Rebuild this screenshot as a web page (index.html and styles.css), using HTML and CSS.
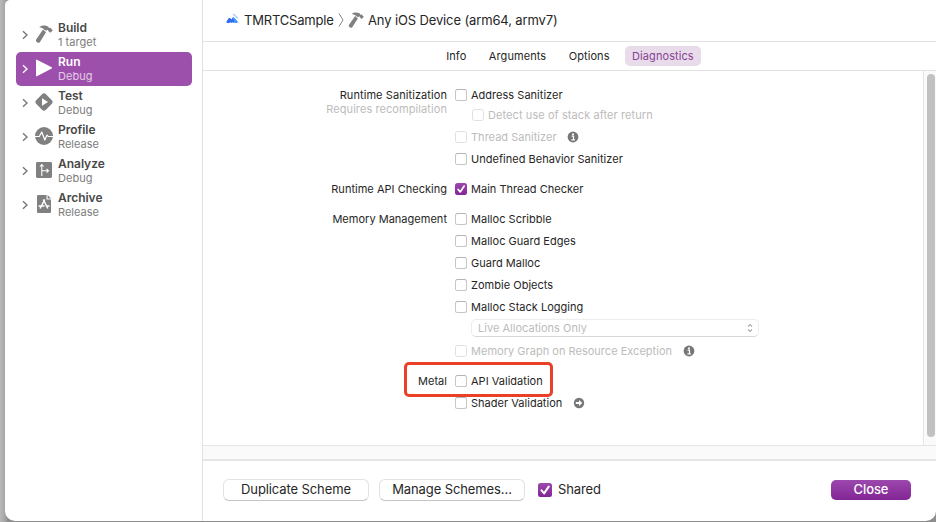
FILE: index.html
```html
<!DOCTYPE html>
<html lang="en">
<head>
<meta charset="utf-8">
<title>Edit Scheme</title>
<link rel="stylesheet" href="styles.css">
</head>
<body>
<svg width="0" height="0" class="defs">
  <symbol id="hammer" viewBox="0 0 18 18"><path d="M4.200 2.200C6.500 0.300 10.500 0 13.300 1.800L14 3.100L15.300 2.700L17.800 5.300L15.400 7.800L13.200 6L12.900 4.700L10.800 5.800L8.600 4C7.500 2.900 5.800 2.400 4.200 2.200ZM8 4.600L11 7.300L4.800 17.200Q3.600 18.300 2.300 17.400L1.400 16.600Q0.400 15.600 1.200 14.400Z"/></symbol>
  <symbol id="chevron" viewBox="0 0 6 10"><path d="M1 1.300L5 5L1 8.700" fill="none" stroke="currentColor" stroke-width="1.400"/></symbol>
  <symbol id="info" viewBox="0 0 12 12"><circle cx="6" cy="6" r="5.400" fill="#777"/><circle cx="6" cy="3.200" r="1" fill="#fff"/><path d="M4.600 5.200H6.500V8.700M4.400 8.900H7.900" fill="none" stroke="#fff" stroke-width="1.200"/></symbol>
  <symbol id="check" viewBox="0 0 12 12"><path d="M3 6.300L5.200 8.900L9.200 3.100" fill="none" stroke="#fff" stroke-width="1.700" stroke-linecap="round" stroke-linejoin="round"/></symbol>
</svg>
<div class="window">
  <nav class="sidebar">
    <div class="action"><svg class="chev"><use href="#chevron"/></svg><svg class="icon"><use href="#hammer"/></svg><div><b>Build</b><small>1 target</small></div></div>
    <div class="action selected"><svg class="chev"><use href="#chevron"/></svg><svg class="icon" viewBox="0 0 18 18"><path d="M1 1.200Q1 0.300 1.900 0.700L16.700 8.300Q17.500 9 16.700 9.600L1.900 17.200Q1 17.500 1 16.700Z"/></svg><div><b>Run</b><small>Debug</small></div></div>
    <div class="action"><svg class="chev"><use href="#chevron"/></svg><svg class="icon" viewBox="0 0 18 18"><rect x="2.200" y="2.200" width="13.600" height="13.600" rx="2.800" transform="rotate(45 9 9)"/><path d="M7 5.300L13 9L7 12.700Z" fill="#fff"/></svg><div><b>Test</b><small>Debug</small></div></div>
    <div class="action"><svg class="chev"><use href="#chevron"/></svg><svg class="icon" viewBox="0 0 18 18"><circle cx="9" cy="9" r="9"/><path d="M0 9.500H4.300L6.800 5L9.800 13L12 8L13.200 9.500H18" fill="none" stroke="#fff" stroke-width="1.200" stroke-linejoin="round"/></svg><div><b>Profile</b><small>Release</small></div></div>
    <div class="action"><svg class="chev"><use href="#chevron"/></svg><svg class="icon" viewBox="0 0 18 18"><rect x="1" y="1" width="16" height="16" rx="1.400"/><path d="M6.800 15V4M5 5.500L6.800 3.500L8.600 5.500M7 9.800H13M11.500 7.900L13.500 9.800L11.500 11.700" fill="none" stroke="#fff" stroke-width="1.100"/></svg><div><b>Analyze</b><small>Debug</small></div></div>
    <div class="action"><svg class="chev"><use href="#chevron"/></svg><svg class="icon" viewBox="0 0 18 18"><path d="M3.300 0H11.500V4.500H16V16.700Q16 18 14.700 18H3.300Q2 18 2 16.700V1.300Q2 0 3.300 0ZM12.600 0L16 3.400H12.600Z"/><path d="M8.300 4.500L12.800 13.500M9.800 4.500L5 13.500M3.500 11H9.500M12 11H14.500" fill="none" stroke="#fff" stroke-width="1.500"/></svg><div><b>Archive</b><small>Release</small></div></div>
  </nav>
  <main class="main">
    <header class="path">
      <svg class="app" viewBox="0 0 13 12"><path d="M0.500 8.500L2.500 5.400Q3.500 4.200 4.500 5.400L5.200 6.600L6.400 4.900Q7.300 3.800 8.400 5L11.300 8.300Q12 9.800 10.500 10Q9.500 10 8.800 9.200Q7.800 10.300 6.600 9.200Q5.400 10.500 4.200 9.200Q3 10.300 1.500 10Q0 9.800 0.500 8.500Z" fill="#2f6bef"/><path d="M7.300 4.200L8.400 5L11.300 8.300Q12 9.800 10.500 10Q9.500 10 8.800 9.200L6.800 6Z" fill="#419bf8"/><path d="M7.200 1L12 5.500" stroke="#a9ccf8" stroke-width="1.300"/></svg>
      <span class="scheme">TMRTCSample</span>
      <svg class="sep" viewBox="0 0 6 14"><path d="M1 .5L5 7L1 13.500" fill="none" stroke="#858585"/></svg>
      <svg class="ham"><use href="#hammer"/></svg>
      <span class="device">Any iOS Device (arm64, armv7)</span>
    </header>
    <div class="tabs"><span>Info</span><span>Arguments</span><span>Options</span><span class="active">Diagnostics</span></div>
    <div class="body">
      <div class="form">
        <section class="first">
          <div class="label">Runtime Sanitization<em>Requires recompilation</em></div>
          <div class="opts">
            <div class="row top"><i class="box"></i><span>Address Sanitizer</span></div>
            <div class="row nested off"><i class="box"></i><span>Detect use of stack after return</span></div>
            <div class="row off"><i class="box"></i><span>Thread Sanitizer</span><svg class="hint"><use href="#info"/></svg></div>
            <div class="row"><i class="box"></i><span>Undefined Behavior Sanitizer</span></div>
          </div>
        </section>
        <section>
          <div class="label">Runtime API Checking</div>
          <div class="opts"><div class="row"><i class="box on"><svg><use href="#check"/></svg></i><span>Main Thread Checker</span></div></div>
        </section>
        <section>
          <div class="label">Memory Management</div>
          <div class="opts">
            <div class="row"><i class="box"></i><span>Malloc Scribble</span></div>
            <div class="row"><i class="box"></i><span>Malloc Guard Edges</span></div>
            <div class="row"><i class="box"></i><span>Guard Malloc</span></div>
            <div class="row"><i class="box"></i><span>Zombie Objects</span></div>
            <div class="row"><i class="box"></i><span>Malloc Stack Logging</span></div>
            <div class="select"><span>Live Allocations Only</span><svg viewBox="0 0 6 10"><path d="M1 3.500L3 1.500L5 3.500M1 6.500L3 8.500L5 6.500" fill="none" stroke="#aaa" stroke-width="1.100"/></svg></div>
            <div class="row off"><i class="box"></i><span>Memory Graph on Resource Exception</span><svg class="hint"><use href="#info"/></svg></div>
          </div>
        </section>
        <section class="metal">
          <div class="label">Metal</div>
          <div class="opts">
            <div class="row"><i class="box"></i><span>API Validation</span></div>
            <div class="row"><i class="box"></i><span>Shader Validation</span><svg class="hint" viewBox="0 0 12 12"><circle cx="6" cy="6" r="5.200" fill="#777"/><path d="M2.800 5H6V3L9.300 6L6 9V7H2.800Z" fill="#fff"/></svg></div>
          </div>
          <div class="highlight"></div>
        </section>
      </div>
      <div class="track"><div class="thumb"></div></div>
    </div>
    <div class="band"></div>
    <footer class="footer">
      <button class="btn">Duplicate Scheme</button>
      <button class="btn">Manage Schemes...</button>
      <i class="box big on"><svg><use href="#check"/></svg></i><span class="shared">Shared</span>
      <button class="close">Close</button>
    </footer>
  </main>
</div>
</body>
</html>
```
FILE: styles.css
```css
* { box-sizing: border-box; }
body { margin: 0; width: 936px; height: 522px; overflow: hidden; padding: 0 0 1px 5px; background: linear-gradient(90deg, #b9b9b9 0, #a5a5a5 5px, #8d8d8d 8px); font-family: Inter, "Liberation Sans", sans-serif; font-size: 11px; letter-spacing: .02px; color: #262626; }
.defs { position: absolute; }
svg { display: block; flex: none; }
.window { display: flex; height: 521px; background: #fff; border-radius: 5px 0 10px 10px; overflow: hidden; }
.sidebar { width: 198px; flex: none; border-right: 1px solid #e2e2e2; padding: 18px 10px 0 11px; }
.action { display: flex; align-items: center; height: 34px; padding-left: 6px; border-radius: 5px; color: #777; }
.chev { width: 6px; height: 10px; margin: 0 7px 1px 0; }
.icon { width: 18px; height: 18px; margin: 0 5px 2px 0; fill: #808080; }
.action b { display: block; font-size: 12px; line-height: 14px; font-weight: 600; color: #484848; letter-spacing: -.02px; }
.action small { display: block; font-size: 11px; line-height: 14px; color: #7c7c7c; }
.selected { background: #9d50ab; color: #fff; }
.selected .icon { fill: #fff; }
.selected b { color: #fff; }
.selected small { color: #e4cbe8; }
.main { flex: 1; display: flex; flex-direction: column; }
.path { height: 42px; border-bottom: 1px solid #e2e2e2; display: flex; align-items: center; padding: 0 0 1px 23px; font-size: 13px; letter-spacing: -.13px; }
.app { width: 13px; height: 12px; margin: 0 5px 2px 0; }
.scheme { width: 94px; white-space: nowrap; letter-spacing: -.19px; }
.sep { width: 6px; height: 14px; margin-right: 4px; }
.ham { width: 16px; height: 16px; fill: #808080; margin-right: 4px; }
.tabs { height: 29px; border-bottom: 1px solid #e2e2e2; display: flex; align-items: center; justify-content: center; gap: 8.500px; padding-left: 1px; letter-spacing: .08px; }
.tabs span { padding: 0 7px; height: 20px; line-height: 20px; border-radius: 5px; }
.tabs .active { background: #e8dbea; color: #894394; }
.body { height: 374px; display: flex; }
.form { width: 721px; border-right: 1px solid #e5e5e5; padding-top: 15px; }
.track { flex: 1; background: #fafafa; padding: 3px 1px 0 3px; }
.thumb { width: 8px; height: 363px; border-radius: 4px; background: #c1c1c1; }
section { display: flex; gap: 8px; margin-bottom: 8px; position: relative; }
.label { width: 244px; text-align: right; line-height: 22px; }
.first .label { line-height: 18px; letter-spacing: .08px; }
.label em { display: block; font-style: normal; line-height: 14px; color: #bcbcbc; margin-top: -2px; }
.row { height: 22px; display: flex; align-items: center; white-space: nowrap; }
.row.top { height: 18px; }
.nested { padding-left: 17px; letter-spacing: .08px; }
.box { width: 12px; height: 12px; flex: none; border: 1px solid #c6c6c6; border-top-color: #b5b5b5; border-radius: 2.500px; margin-right: 4px; background: #fff; }
.off { color: #bcbcbc; }
.off .box { border-color: #e0e0e0; }
.box.on { border: 0; background: linear-gradient(#9c48ad, #822595); }
.box svg { width: 100%; height: 100%; }
.hint { width: 12px; height: 12px; margin-left: 10.500px; }
.select { width: 288px; height: 18px; margin: 1px 0 3px 16px; border: 1px solid #ededed; border-bottom-color: #d8d8d8; border-radius: 5px; padding: 0 5px 0 6px; display: flex; align-items: center; justify-content: space-between; color: #bcbcbc; }
.select svg { width: 6px; height: 10px; }
.highlight { position: absolute; left: 201px; top: -8px; width: 149px; height: 35px; border: 3px solid #ea4027; border-radius: 5px; }
.band { height: 16px; background: #fafafa; border-top: 1px solid #e5e5e5; border-bottom: 2px solid #e5e5e5; }
.footer { flex: 1; display: flex; align-items: center; padding: 0 25px 2px 20px; font-size: 13px; letter-spacing: -.1px; }
button { font: inherit; letter-spacing: inherit; padding: 0 0 2px; color: inherit; }
.shared { padding-bottom: 2px; }
.btn { width: 146px; height: 22px; margin-right: 10px; border: 1px solid #e2e2e2; border-bottom-color: #c4c4c4; border-radius: 6px; background: #fff; }
.box.big { width: 14px; height: 14px; margin: 0 6px 1px 3px; }
.close { width: 80px; height: 20px; margin-left: auto; border: 0; border-radius: 5px; color: #fff; font-weight: 500; background: linear-gradient(#9c48ad, #822595); }
```
